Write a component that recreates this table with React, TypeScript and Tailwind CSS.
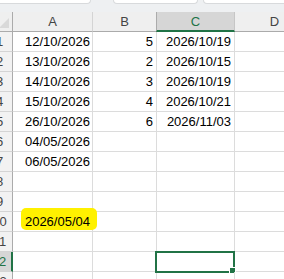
const rows: { a?: string; b?: string; c?: string; mark?: boolean }[] = [
  { a: '12/10/2026', b: '5', c: '2026/10/19' },
  { a: '13/10/2026', b: '2', c: '2026/10/15' },
  { a: '14/10/2026', b: '3', c: '2026/10/19' },
  { a: '15/10/2026', b: '4', c: '2026/10/21' },
  { a: '26/10/2026', b: '6', c: '2026/11/03' },
  { a: '04/05/2026' },
  { a: '06/05/2026' },
  {},
  {},
  { a: '2026/05/04', mark: true },
  {},
  {},
  {},
]

const cols = ['A', 'B', 'C', 'D']

export default function App() {
  return (
    <div className="w-[284px] h-[279px] overflow-hidden bg-white font-['Liberation_Sans',Arial,sans-serif] text-[13px] leading-none text-black">
      {/* toolbar edge */}
      <div className="h-[12px] bg-[#eef0f2] flex gap-[22px] overflow-hidden">
        <div className="w-[95px] h-[4px] -ml-[4px] bg-white border border-t-0 border-[#d8dadc] rounded-b-[5px] shrink-0" />
        <div className="w-[85px] h-[4px] bg-white border border-t-0 border-[#d8dadc] rounded-b-[5px] shrink-0" />
        <div className="w-[90px] h-[4px] -ml-[17px] bg-white border border-t-0 border-[#d8dadc] rounded-b-[5px] shrink-0" />
      </div>

      <div className="-ml-[13px] grid grid-cols-[26px_80px_64px_78px_80px]">
        {/* header row */}
        <div className="relative h-[20px] bg-[#efefef] border-r border-b border-[#ababab]">
          <svg className="absolute right-[3px] bottom-[3px]" width="10" height="10" viewBox="0 0 10 10">
            <polygon points="10,0 10,10 0,10" fill="#d9d9d9" />
          </svg>
        </div>
        {cols.map((c) =>
          c === 'C' ? (
            <div
              key={c}
              className="h-[20px] bg-[#d6d6d6] border-l border-l-[#ababab] -ml-px border-r border-r-[#c6c6c6] border-b-2 border-b-[#217346] flex items-center justify-center text-[#217346]"
            >
              {c}
            </div>
          ) : (
            <div
              key={c}
              className="h-[20px] bg-[#efefef] border-r border-r-[#d4d4d4] border-b border-b-[#ababab] flex items-center justify-center text-[#444]"
            >
              {c}
            </div>
          ),
        )}

        {rows.map((r, i) => {
          const n = i + 1
          const sel = n === 12
          return [
            <div
              key={`h${n}`}
              className={
                sel
                  ? 'h-[20px] bg-[#d6d6d6] border-r-2 border-r-[#217346] border-b border-b-[#d4d4d4] flex items-center justify-center text-[#217346]'
                  : 'h-[20px] bg-[#f2f2f2] border-r border-r-[#ababab] border-b border-b-[#d4d4d4] flex items-center justify-center text-[#444]'
              }
            >
              {n}
            </div>,
            <div key={`a${n}`} className="relative h-[20px] border-r border-b border-[#dcdcdc] flex items-end justify-end pr-[2px] pb-[3px]">
              {r.mark && <span className="absolute left-[8px] -right-[5px] -top-[4px] bottom-[1px] bg-[#fff100] rounded-[5px]" />}
              {r.a && <span className="relative">{r.a}</span>}
            </div>,
            <div key={`b${n}`} className="h-[20px] border-r border-b border-[#dcdcdc] flex items-end justify-end pr-[3px] pb-[3px]">
              {r.b}
            </div>,
            <div key={`c${n}`} className="relative h-[20px] border-r border-b border-[#dcdcdc] flex items-end justify-end pr-[3px] pb-[3px]">
              {sel && (
                <div className="absolute -left-[2px] -top-[1px] w-[80px] h-[22px] border-2 border-[#217346]">
                  <span className="absolute -right-[3px] -bottom-[3px] w-[7px] h-[7px] bg-[#217346] border border-white" />
                </div>
              )}
              {r.c}
            </div>,
            <div key={`d${n}`} className="h-[20px] border-r border-b border-[#dcdcdc]" />,
          ]
        })}
      </div>
    </div>
  )
}
